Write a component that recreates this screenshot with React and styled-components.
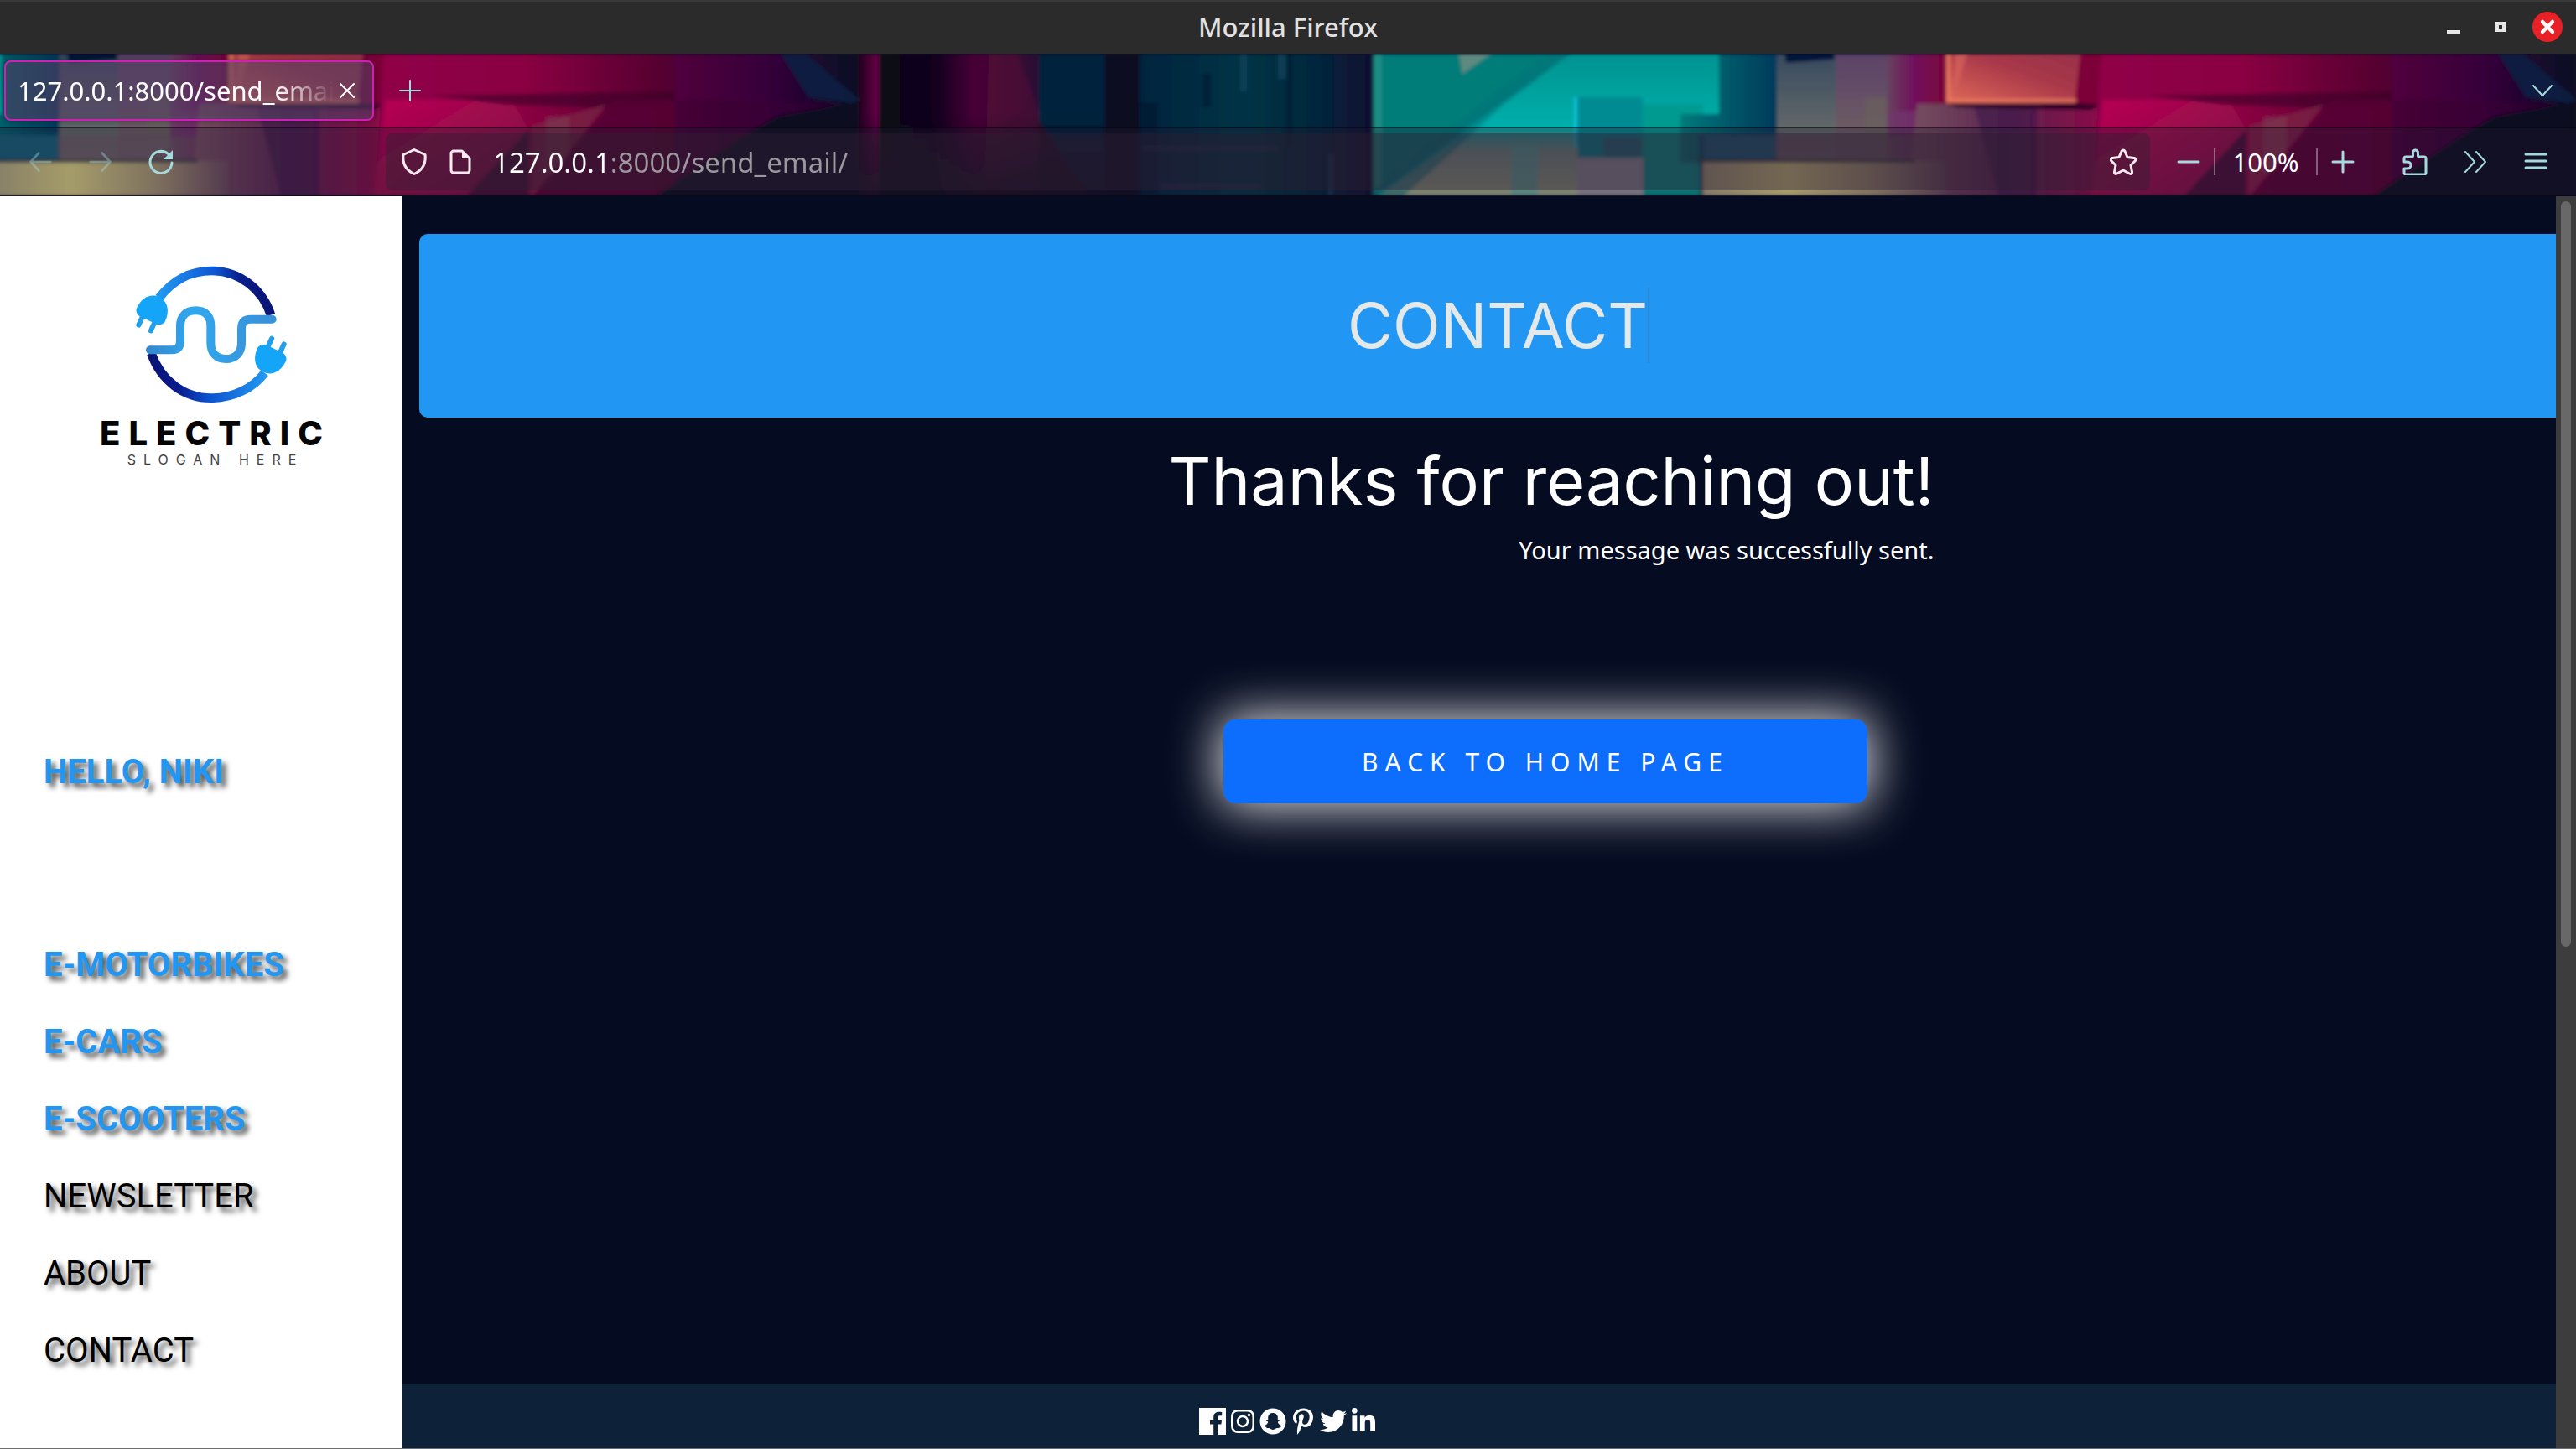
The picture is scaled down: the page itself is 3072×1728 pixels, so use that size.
import React from "react";
import styled, { createGlobalStyle, css } from "styled-components";
import { FaInstagram, FaSnapchat, FaPinterestP, FaTwitter, FaLinkedinIn } from "react-icons/fa";

const ui = `"Noto Sans", "Open Sans", sans-serif`;
const display = `Inter, Lato, sans-serif`;

const GlobalStyle = createGlobalStyle`
  *, *::before, *::after { box-sizing: border-box; }
  body { margin: 0; background: #050b20; font-family: ${ui}; }
  h1, h2, p, ul { margin: 0; padding: 0; font-weight: 400; }
  ul { list-style: none; }
  a { text-decoration: none; color: inherit; }
  button { font: inherit; color: inherit; background: none; border: 0; padding: 0; cursor: pointer; }
  svg { display: block; }
`;

const Window = styled.div`
  min-height: 100vh;
  display: flex;
  flex-direction: column;
  border-bottom: 1px solid #6b6d72;
`;

/* Window title bar */
const TitleBar = styled.header`
  height: 64px;
  display: grid;
  grid-template-columns: 1fr auto 1fr;
  align-items: center;
  background: #2b2b2b;
  border-top: 2px solid #373737;
  padding: 0 16px 2px 0;
`;
const WindowTitle = styled.h1`
  grid-column: 2;
  margin-left: 16px;
  font-size: 31px;
  line-height: 40px;
  font-weight: 500;
  color: #e2e2e2;
`;
const WindowControls = styled.div`
  display: flex;
  justify-content: flex-end;
  align-items: center;
  gap: 20px;
`;
const WindowButton = styled.button`
  width: 36px;
  height: 36px;
  display: grid;
  place-items: center;
  border-radius: 50%;
  background: ${(p) => (p.$danger ? "#e82127" : "transparent")};
`;

/* Tabs and toolbar over the theme artwork */
const Chrome = styled.div`
  position: relative;
  overflow: hidden;
  isolation: isolate;
  background: #0a0a22;
`;
const ArtLayer = styled.svg`
  position: absolute;
  top: 0;
  right: 0;
  z-index: -1;
`;
const TabStrip = styled.div`
  height: 88px;
  display: flex;
  align-items: center;
  padding: 0 24px 0 5px;
  color: #a4dadd;
`;
const Tab = styled.div`
  width: 441px;
  height: 72px;
  display: flex;
  align-items: center;
  padding: 0 14px;
  border: 2px solid #cf1fb6;
  border-radius: 8px;
  background: rgba(80, 62, 96, 0.6);
  box-shadow: 0 0 8px rgba(0, 0, 0, 0.4);
  color: #fff;
`;
const TabTitle = styled.span`
  flex: 1;
  overflow: hidden;
  white-space: nowrap;
  font-size: 31px;
  line-height: 40px;
  mask-image: linear-gradient(90deg, #000 82%, transparent 100%);
`;
const IconButton = styled.button`
  width: ${(p) => p.$width || 72}px;
  height: 64px;
  display: grid;
  place-items: center;
  flex: none;
  opacity: ${(p) => (p.$faded ? 0.4 : 1)};
`;
const Spring = styled.div`
  flex: 1;
`;
const Toolbar = styled.div`
  display: flex;
  align-items: center;
  padding: 6px 32px 5px 12px;
  border-top: 1px solid rgba(0, 0, 0, 0.5);
  border-bottom: 2px solid rgba(8, 4, 20, 0.7);
  background: rgba(30, 24, 46, 0.3);
  color: #a4dadd;
`;
const AddressBar = styled.form`
  flex: 1;
  height: 68px;
  margin: 0 16px 0 232px;
  display: flex;
  align-items: center;
  gap: 26px;
  padding: 0 16px 0 18px;
  border-radius: 8px;
  background: rgba(48, 32, 50, 0.42);
  color: #fbe9f1;
`;
const AddressInput = styled.input`
  flex: 1;
  min-width: 0;
  height: 48px;
  padding: 0;
  border: 0;
  outline: 0;
  font-family: ${ui};
  font-size: 33px;
  color: transparent;
  background: linear-gradient(90deg, #fff 141px, #9d989f 141px) text;
`;
const Zoom = styled.div`
  display: flex;
  align-items: center;
  font-size: 31px;
  color: #fff;
`;
const ZoomLevel = styled.button`
  width: 124px;
  height: 32px;
  line-height: 32px;
  border-left: 2px solid rgba(255, 255, 255, 0.35);
  border-right: 2px solid rgba(255, 255, 255, 0.35);
`;
const Tint = styled.span`
  color: #a4dadd;
`;
const ToolGroup = styled.div`
  display: flex;
  gap: 40px;
  margin-left: 40px;
`;

/* Page */
const Page = styled.div`
  flex: 1;
  display: flex;
`;
const Sidebar = styled.aside`
  width: 480px;
  flex: none;
  padding: 80px 52px 0;
  background: #fff;
`;
const Brand = styled.a`
  display: flex;
  flex-direction: column;
  align-items: center;
  padding-left: 24px;
  margin: 0 -16px;
`;
const BrandName = styled.span`
  margin-top: 10px;
  padding-left: 10px;
  font-family: ${display};
  font-size: 40px;
  line-height: 46px;
  font-weight: 800;
  letter-spacing: 10px;
  color: #050505;
`;
const BrandSlogan = styled.span`
  padding-left: 10px;
  font-family: ${display};
  font-size: 16px;
  line-height: 16px;
  letter-spacing: 9px;
  color: #444;
`;
const Greeting = styled.p`
  margin-top: 319px;
  margin-bottom: 138px;
`;
const MenuLink = styled.a`
  font-family: Roboto, sans-serif;
  font-size: 40px;
  line-height: 92px;
  text-shadow: 5px 5px 6px rgba(0, 0, 0, 0.7);
  white-space: nowrap;
  ${(p) =>
    p.$accent
      ? css`
          color: #2196f3;
          font-weight: 700;
        `
      : css`
          color: #000;
        `}
`;
const Main = styled.main`
  flex: 1;
  min-width: 0;
  display: flex;
  flex-direction: column;
  background: #050b20;
  color: #fff;
`;
const Banner = styled.section`
  margin: 45px 0 0 20px;
  padding: 64px 0 65px 26px;
  display: flex;
  justify-content: center;
  border-radius: 10px 0 0 10px;
  background: #2196f3;
`;
const BannerTitle = styled.h2`
  font-family: ${display};
  font-size: 74px;
  line-height: 90px;
  font-weight: 400;
  color: #e3e8ea;
  border-right: 2px solid #2b87d3;
`;
const Content = styled.section`
  flex: 1;
  display: flex;
  flex-direction: column;
  align-items: center;
  padding: 30px 0 0 158px;
`;
const Message = styled.div`
  padding-left: 14px;
  text-align: right;
`;
const Thanks = styled.h2`
  font-family: ${display};
  font-size: 79px;
  line-height: 90px;
`;
const Detail = styled.p`
  padding-top: 14px;
  font-size: 29px;
  line-height: 48px;
`;
const HomeButton = styled.button`
  width: 768px;
  height: 100px;
  margin-top: 178px;
  border-radius: 14px;
  background: #0d6efd;
  color: #fff;
  font-size: 30px;
  letter-spacing: 8px;
  text-transform: uppercase;
  box-shadow: 0 0 60px 4px rgba(255, 255, 255, 0.9);
`;
const Footer = styled.footer`
  height: 77px;
  display: flex;
  justify-content: center;
  align-items: center;
  gap: 4px;
  padding: 12px 456px 0 0;
  background: #0d2138;
  font-size: 32px;
`;
const ScrollTrack = styled.div`
  width: 24px;
  flex: none;
  padding: 6px;
  background: #3d3d3d;
`;
const ScrollThumb = styled.div`
  width: 12px;
  height: 60%;
  border-radius: 6px;
  background: #686868;
`;

/* One repeat of the abstract block painting behind the tabs */
function ArtTile() {
  return (
    <g id="tile">
      <rect width="2048" height="170" fill="#0a0a22" />
      <rect width="24" height="170" fill="url(#a-fade)" />
      <rect x="24" width="191" height="170" fill="url(#a-plum)" />
      <path d="M155 0h35l25 70 60 100H150z" fill="#6a1838" opacity=".35" />
      <path d="M215 0h78v170h-18L215 80z" fill="#04233d" />
      <rect width="300" height="170" fill="url(#a-dusk)" />
      <rect x="293" width="42" height="170" fill="#100722" />
      <rect x="335" width="279" height="170" fill="url(#a-sea)" />
      <path d="M455 0h8v45h-8zM500 0h10v30h-10zM560 120h5v50h-5z" fill="#17506a" opacity=".5" />
      <path d="M335 58h22v112h-22zM410 24h10v40h-10zM510 0h7v110h-7z" fill="#03152c" opacity=".5" />
      <path d="M340 110h160v6H340zM360 155h120v6H360z" fill="#243050" opacity=".5" />
      <rect x="614" width="481" height="170" fill="url(#a-teal)" />
      <path d="M614 0h235L614 170z" fill="#007c79" />
      <path d="M614 0h10v160l-10 8z" fill="#2b9a8a" opacity=".6" />
      <path d="M735 88h122v36h78v46H620z" fill="url(#a-sand)" />
      <path d="M849 0 770 60 700 125 650 170h-36v-8L820 0z" fill="#00747c" opacity=".55" />
      <path d="M716 0h38l-34 24z" fill="#5e8a80" />
      <path d="M778 110h32v60h-32z" fill="#4fb6ad" opacity=".6" />
      <path d="M857 52h78v73h-78z" fill="#00808c" opacity=".75" />
      <path d="M853 52h4v60h-4z" fill="#12c8e0" opacity=".8" />
      <path d="M888 100h46v22h-46z" fill="#2d5f72" opacity=".7" />
      <path d="M857 125h78v45h-78z" fill="#9a98a2" />
      <path d="M935 60h72v110h-72z" fill="#009a90" />
      <path d="M980 72h46V0h69v130h-115z" fill="url(#a-deep)" />
      <path d="M1007 97h86v30h-86z" fill="#17607a" />
      <path d="M1003 97h4v73h-4z" fill="#054a5c" />
      <rect x="1095" width="70" height="130" fill="url(#a-slate)" />
      <path d="M1104 0h60v7l-58 4z" fill="#06143a" />
      <rect x="1165" width="62" height="130" fill="url(#a-mauve)" />
      <rect x="1227" width="72" height="130" fill="url(#a-berry)" />
      <path d="M1200 52h25v50h-25z" fill="#6a6458" opacity=".5" />
      <path d="M1093 97h170v33h-170z" fill="#6c5866" opacity=".6" />
      <path d="M1227 68h38v32h-38z" fill="#70386c" opacity=".7" />
      <path d="M1262 60h222l-12 110h-220z" fill="url(#a-wine)" />
      <rect x="1007" y="128" width="290" height="42" fill="url(#a-gold)" />
      <path d="M1000 126h260v4h-260z" fill="#2c3840" opacity=".8" />
      <path d="M1330 62h75v108h-46z" fill="#33174a" opacity=".45" />
      <path d="M1299 0h190v62h-190z" fill="#7d0339" />
      <path d="M1297 0h160l-7 59h-153z" fill="url(#a-coral)" />
      <path d="M1297 0h5v54h150v4h-155z" fill="#ec7a60" opacity=".8" />
      <path d="M1322 0h-14l-2 52z" fill="#d8645c" opacity=".7" />
      <path d="M1297 59h153l30 2-10 6-160-3z" fill="#2a0526" />
      <path d="M1482 0h348v170h-360z" fill="url(#a-rose)" />
      <path d="M1484 55h150l20 35-76 80h-108z" fill="url(#a-hot)" />
      <path d="M1540 50l290-5 218 14v8l-300-2-120-4z" fill="#3a0328" opacity=".6" />
      <path d="M1655 90l-75 80h75z" fill="#4a0838" />
      <path d="M1658 86l90-26-90 110z" fill="#7c2c48" opacity=".6" />
      <path d="M1675 75h28v50l-28 20z" fill="#7d4a58" opacity=".45" />
      <path d="M1755 56h90v114h-185z" fill="#560334" opacity=".9" />
      <rect x="1828" width="220" height="170" fill="url(#a-night)" />
      <path d="M1955 0h30l63 54v6l-60-8z" fill="#072445" opacity=".8" />
      <path d="M1828 54l220 6v110h-220z" fill="#3a0330" opacity=".45" />
      <path d="M1805 170 1900 105l50-30 98-18v113z" fill="#0a0920" />
    </g>
  );
}

const gradients = [
  ["a-fade", 1, 0, [["0", "#22001f"], ["1", "#6a0048"]]],
  ["a-plum", 1, 0, [["0", "#0a0815"], [".35", "#12041f"], [".6", "#480036"], ["1", "#2a0a34"]]],
  ["a-dusk", 0, 1, [["0", "#0d0b1e00"], [".4", "#0d0b1e00"], ["1", "#0d0b1ecc"]]],
  ["a-sea", 1, 0, [["0", "#04243e"], [".45", "#023345"], [".75", "#04273c"], ["1", "#0c0e30"]]],
  ["a-teal", 0, 1, [["0", "#009390"], [".5", "#00aeaa"], ["1", "#00989a"]]],
  ["a-sand", 0, 1, [["0", "#00b0ac"], [".35", "#7c9c8c"], ["1", "#a8b48c"]]],
  ["a-deep", 1, 0, [["0", "#007a7c"], [".5", "#005868"], ["1", "#003a5c"]]],
  ["a-slate", 0, 1, [["0", "#384a60"], ["1", "#75766c"]]],
  ["a-mauve", 0, 1, [["0", "#5c4268"], ["1", "#746662"]]],
  ["a-berry", 1, 0, [["0", "#66425e"], [".5", "#720a5a"], ["1", "#7a0538"]]],
  ["a-gold", 1, 0, [["0", "#b0a880"], [".35", "#e0d684"], [".7", "#a89874"], ["1", "#6a485c"]]],
  ["a-wine", 1, 0, [["0", "#765060"], [".5", "#5c2450"], ["1", "#8a0a48"]]],
  ["a-coral", 1, -1, [["0", "#e06a58"], [".6", "#a8384a"], ["1", "#9a3048"]]],
  ["a-rose", 1, 0, [["0", "#900048"], [".5", "#8a0042"], ["1", "#50002f"]]],
  ["a-hot", 1, 1, [["0", "#b80054"], ["1", "#7a1444"]]],
  ["a-night", 1, 0, [["0", "#50003c"], [".5", "#36033a"], ["1", "#070a24"]]],
];

function ThemeArt() {
  return (
    <ArtLayer width="4096" height="170" viewBox="0 0 4096 170" aria-hidden="true">
      <defs>
        <filter id="a-soft" x="0" y="0" width="1" height="1">
          <feGaussianBlur stdDeviation="2" edgeMode="duplicate" />
        </filter>
        {gradients.map(([id, x, y, stops]) => (
          <linearGradient key={id} id={id} x1="0" y1={y < 0 ? 1 : 0} x2={x} y2={y > 0 ? 1 : 0}>
            {stops.map(([offset, color]) => (
              <stop key={offset} offset={offset} stopColor={color} />
            ))}
          </linearGradient>
        ))}
      </defs>
      <g filter="url(#a-soft)">
        <ArtTile />
        <use href="#tile" x="2048" />
      </g>
    </ArtLayer>
  );
}

function Line({ d, w = 32, sw = 2, color = "currentColor", fill = "none" }) {
  return (
    <svg width={w} height={w} viewBox="0 0 32 32" fill={fill} stroke={color} strokeWidth={sw} strokeLinecap="round" strokeLinejoin="round" aria-hidden="true">
      <path d={d} />
    </svg>
  );
}

const glyph = {
  plus: "M4 16h24M16 4v24",
  minus: "M4 16h24",
  close: "M8 8l16 16M24 8L8 24",
  back: "M30 16H3M14 4L3 16l11 12",
  forward: "M2 16h27M18 4l11 12-11 12",
  chevron: "M5 10l11 12 11-12",
  more: "M4 4l11 12L4 28M17 4l11 12-11 12",
  menu: "M4 7h24M4 15h24M4 23h24",
  shield: "M16 1.500l13 6c1 9-2 18-13 23C5 25.500 2 16.500 3 7.500z",
  star: "M16 2c1 0 1.500.5 2 1.500l3 7 8 1c2 .3 2.500 2 1 3.500l-5 5 1.500 8c.3 2-1 3-3 2L16 26l-7.500 4c-2 1-3.300 0-3-2L7 20l-5-5c-1.500-1.500-1-3.200 1-3.500l8-1 3-7C14.500 2.500 15 2 16 2z",
  puzzle: "M5 10h7c1 0 1.500-.5 1.500-1.500V5a3 3 0 0 1 6 0v3.500c0 1 .5 1.500 1.500 1.500h6c1.500 0 2 .5 2 2v17c0 1-.5 2-2 2H5c-1.500 0-2-.5-2-2v-5h4a4 4 0 0 0 0-8H3v-4c0-1.500.5-2 2-2z",
};

function PageIcon() {
  return (
    <svg width="26" height="30" viewBox="0 0 26 30" aria-hidden="true">
      <path d="M4 2h11l9 9v14a3 3 0 0 1-3 3H5a3 3 0 0 1-3-3V4z" fill="none" stroke="currentColor" strokeWidth="3" strokeLinejoin="round" />
      <path d="M15 2v9h9z" fill="currentColor" />
    </svg>
  );
}

function ReloadIcon() {
  return (
    <svg width="32" height="32" viewBox="0 0 32 32" aria-hidden="true">
      <path d="M29 17a13 13 0 1 1-4-10" fill="none" stroke="currentColor" strokeWidth="3" strokeLinecap="round" />
      <path d="M30 2v11H19z" fill="currentColor" />
    </svg>
  );
}

function FacebookIcon() {
  return (
    <svg width="32" height="32" viewBox="0 0 32 32" aria-hidden="true">
      <path d="M0 0h32v32h-9.800V19.600h4.200l.6-4.800h-4.800v-3.100c0-1.400.4-2.400 2.400-2.400h2.600V5c-.4 0-2-.2-3.700-.2-3.700 0-6.300 2.300-6.300 6.400v3.600h-4.200v4.800h4.200V32H0z" fill="#fff" />
    </svg>
  );
}

function Plug({ transform }) {
  return (
    <g transform={transform}>
      <path d="M-56 22C-56-22-32-48 0-48s56 26 56 70c0 12-14 22-24 22h-64c-10 0-24-10-24-22z" fill="#14a4f8" />
      <path d="M-24 44v30M24 44v30" stroke="#22a0ee" strokeWidth="18" strokeLinecap="round" />
    </g>
  );
}

function LogoMark() {
  return (
    <svg width="186" height="170" viewBox="238 66 558 510" fill="none" aria-hidden="true">
      <defs>
        <linearGradient id="l-top" x1="0" x2="1">
          <stop offset="0" stopColor="#2298f0" />
          <stop offset=".5" stopColor="#0c56d4" />
          <stop offset=".72" stopColor="#0a1f8c" />
          <stop offset="1" stopColor="#0a1474" />
        </linearGradient>
        <linearGradient id="l-bottom" x1="1" x2="0">
          <stop offset="0" stopColor="#2298f0" />
          <stop offset=".5" stopColor="#0c50d0" />
          <stop offset=".75" stopColor="#081c90" />
          <stop offset="1" stopColor="#0a1474" />
        </linearGradient>
        <linearGradient id="l-wave" x1="0" x2="1">
          <stop offset="0" stopColor="#3488d0" />
          <stop offset=".35" stopColor="#30a8ee" />
          <stop offset="1" stopColor="#3890d8" />
        </linearGradient>
      </defs>
      <path d="M330 190C380 125 445 93 518 93c100 0 182 66 212 158" stroke="url(#l-top)" strokeWidth="32" />
      <path d="M302 388C336 485 418 548 516 548c80 0 150-35 192-90" stroke="url(#l-bottom)" strokeWidth="32" />
      <path
        d="M298 376h78c22 0 30-12 30-34v-52c0-34 20-55 55-55s54 21 54 55v62c0 34 20 56 54 56s56-22 56-56v-52c0-22 10-34 34-34h76"
        stroke="url(#l-wave)"
        strokeWidth="30"
        strokeLinecap="round"
      />
      <Plug transform="translate(310 230) rotate(25)" />
      <Plug transform="translate(724 412) rotate(205)" />
    </svg>
  );
}

const menu = [
  ["E-MOTORBIKES", true],
  ["E-CARS", true],
  ["E-SCOOTERS", true],
  ["NEWSLETTER", false],
  ["ABOUT", false],
  ["CONTACT", false],
];

const socials = [
  ["Facebook", FacebookIcon],
  ["Instagram", FaInstagram],
  ["Snapchat", FaSnapchat],
  ["Pinterest", FaPinterestP],
  ["Twitter", FaTwitter],
  ["LinkedIn", FaLinkedinIn],
];

export default function App() {
  return (
    <>
      <GlobalStyle />
      <Window>
        <TitleBar>
          <WindowTitle>Mozilla Firefox</WindowTitle>
          <WindowControls>
            <WindowButton aria-label="Minimize">
              <svg width="16" height="16"><path d="M0 12h16v4H0z" fill="#e6e6e6" /></svg>
            </WindowButton>
            <WindowButton aria-label="Maximize">
              <svg width="12" height="12"><path d="M2 2h8v8H2z" fill="none" stroke="#e6e6e6" strokeWidth="4" /></svg>
            </WindowButton>
            <WindowButton aria-label="Close window" $danger>
              <Line d={glyph.close} w={24} sw={6} color="#fff" />
            </WindowButton>
          </WindowControls>
        </TitleBar>

        <Chrome>
          <ThemeArt />
          <TabStrip>
            <Tab>
              <TabTitle>127.0.0.1:8000/send_email/</TabTitle>
              <IconButton $width={32} aria-label="Close tab"><Line d={glyph.close} /></IconButton>
            </Tab>
            <IconButton $width={86} aria-label="New tab"><Line d={glyph.plus} /></IconButton>
            <Spring />
            <IconButton $width={32} aria-label="List all tabs"><Line d={glyph.chevron} sw={2} /></IconButton>
          </TabStrip>
          <Toolbar>
            <IconButton $faded aria-label="Back"><Line d={glyph.back} w={28} sw={3} /></IconButton>
            <IconButton $faded aria-label="Forward"><Line d={glyph.forward} w={28} sw={3} /></IconButton>
            <IconButton aria-label="Reload"><ReloadIcon /></IconButton>
            <AddressBar onSubmit={(e) => e.preventDefault()}>
              <Line d={glyph.shield} sw={3} />
              <PageIcon />
              <AddressInput aria-label="Address" defaultValue="127.0.0.1:8000/send_email/" />
              <IconButton $width={32} type="button" aria-label="Bookmark this page"><Line d={glyph.star} sw={3} /></IconButton>
            </AddressBar>
            <Zoom>
              <IconButton $width={60} aria-label="Zoom out"><Tint><Line d={glyph.minus} sw={3} /></Tint></IconButton>
              <ZoomLevel>100%</ZoomLevel>
              <IconButton $width={60} aria-label="Zoom in"><Tint><Line d={glyph.plus} sw={3} /></Tint></IconButton>
            </Zoom>
            <ToolGroup>
              <IconButton $width={32} aria-label="Extensions"><Line d={glyph.puzzle} sw={3} /></IconButton>
              <IconButton $width={32} aria-label="More tools"><Line d={glyph.more} sw={2} /></IconButton>
              <IconButton $width={32} aria-label="Menu"><Line d={glyph.menu} sw={3} /></IconButton>
            </ToolGroup>
          </Toolbar>
        </Chrome>

        <Page>
          <Sidebar>
            <Brand href="#" aria-label="Electric home">
              <LogoMark />
              <BrandName>ELECTRIC</BrandName>
              <BrandSlogan>SLOGAN HERE</BrandSlogan>
            </Brand>
            <Greeting><MenuLink href="#" $accent>HELLO, NIKI</MenuLink></Greeting>
            <nav aria-label="Main">
              <ul>
                {menu.map(([label, accent]) => (
                  <li key={label}><MenuLink href="#" $accent={accent}>{label}</MenuLink></li>
                ))}
              </ul>
            </nav>
          </Sidebar>
          <Main>
            <Banner><BannerTitle>CONTACT</BannerTitle></Banner>
            <Content>
              <Message>
                <Thanks>Thanks for reaching out!</Thanks>
                <Detail>Your message was successfully sent.</Detail>
              </Message>
              <HomeButton>Back to home page</HomeButton>
            </Content>
            <Footer>
              {socials.map(([name, Icon]) => (
                <a key={name} href="#" aria-label={name}><Icon /></a>
              ))}
            </Footer>
          </Main>
          <ScrollTrack><ScrollThumb /></ScrollTrack>
        </Page>
      </Window>
    </>
  );
}
